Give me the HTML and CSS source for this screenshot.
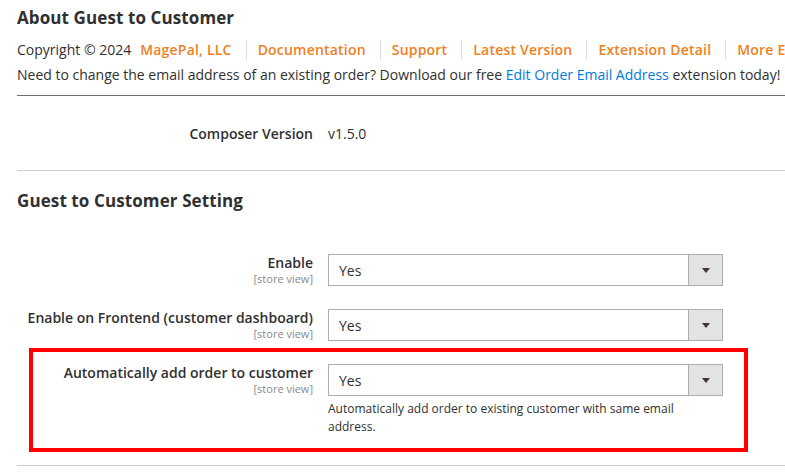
FILE: index.html
```html
<!DOCTYPE html>
<html lang="en">
<head>
<meta charset="utf-8">
<title>Guest to Customer</title>
<link rel="stylesheet" href="styles.css">
</head>
<body>
<div class="page">
  <section class="about">
    <h2 class="section-title">About Guest to Customer</h2>
    <div class="info">
      <div class="links">
        <span class="copy">Copyright © 2024</span>
        <a class="orange first" href="#">MagePal, LLC</a>
        <a class="orange" href="#">Documentation</a>
        <a class="orange" href="#">Support</a>
        <a class="orange" href="#">Latest Version</a>
        <a class="orange" href="#">Extension Detail</a>
        <a class="orange" href="#">More Extensions</a>
      </div>
      <div class="promo">Need to change the email address of an existing order? Download our free <a class="blue" href="#">Edit Order Email Address</a> extension today!</div>
    </div>
  </section>

  <section class="composer">
    <div class="composer-row">
      <div class="composer-label">Composer Version</div>
      <div class="composer-value">v1.5.0</div>
    </div>
  </section>

  <section class="settings">
    <h2 class="section-title">Guest to Customer Setting</h2>

    <div class="field">
      <div class="label"><span class="label-text">Enable</span><span class="scope">[store view]</span></div>
      <div class="control">
        <div class="select"><span class="select-value">Yes</span><span class="select-btn"><span class="arrow"></span></span></div>
      </div>
    </div>

    <div class="field">
      <div class="label"><span class="label-text">Enable on Frontend (customer dashboard)</span><span class="scope">[store view]</span></div>
      <div class="control">
        <div class="select"><span class="select-value">Yes</span><span class="select-btn"><span class="arrow"></span></span></div>
      </div>
    </div>

    <div class="field field-highlight">
      <div class="label"><span class="label-text">Automatically add order to customer</span><span class="scope">[store view]</span></div>
      <div class="control">
        <div class="select"><span class="select-value">Yes</span><span class="select-btn"><span class="arrow"></span></span></div>
        <div class="note">Automatically add order to existing customer with same email address.</div>
      </div>
    </div>
  </section>
</div>
</body>
</html>
```

FILE: styles.css
```css
html, body {
  margin: 0;
  padding: 0;
  background: #ffffff;
  overflow: hidden;
}

body {
  font-family: "Open Sans", "Liberation Sans", sans-serif;
  color: #303030;
  font-size: 14px;
}

.page {
  padding-left: 17px;
  width: 900px;
}

.section-title {
  margin: 0;
  font-size: 17px;
  font-weight: 700;
  letter-spacing: 0.1px;
  line-height: 26px;
  color: #303030;
}

.about {
  padding-top: 5px;
  padding-bottom: 10px;
  border-bottom: 1px solid #6e6e6e;
}

.info {
  margin-top: 9px;
}

.links {
  display: flex;
  align-items: center;
  white-space: nowrap;
  height: 20px;
  line-height: 20px;
}

.copy {
  margin-right: 9px;
}

.orange {
  color: #ef8022;
  font-weight: 600;
  letter-spacing: 0.2px;
  text-decoration: none;
  padding-left: 11px;
  margin-left: 14px;
  border-left: 1px solid #dddddd;
}

.orange.first {
  padding-left: 0;
  margin-left: 0;
  border-left: none;
}

.promo {
  margin-top: 5px;
  line-height: 20px;
  white-space: nowrap;
}

.blue {
  color: #007bdb;
  text-decoration: none;
}

.composer {
  padding-top: 28px;
  padding-bottom: 26px;
  border-bottom: 1px solid #cccccc;
}

.composer-row {
  display: flex;
  line-height: 20px;
}

.composer-label {
  width: 296px;
  text-align: right;
  font-weight: 600;
}

.composer-value {
  margin-left: 15px;
}

.settings {
  padding-top: 17px;
  padding-bottom: 29px;
  border-bottom: 1px solid #cccccc;
}

.settings .section-title {
  margin-bottom: 40px;
}

.field {
  display: flex;
  align-items: flex-start;
  margin-bottom: 23px;
}

.field:last-child {
  margin-bottom: 0;
}

.label {
  width: 296px;
  display: flex;
  flex-direction: column;
  align-items: flex-end;
  text-align: right;
}

.label-text {
  font-weight: 600;
  line-height: 18px;
}

.scope {
  font-size: 11px;
  line-height: 14px;
  color: #8a8a8a;
}

.control {
  margin-left: 15px;
  width: 395px;
}

.select {
  box-sizing: border-box;
  height: 32px;
  border: 1px solid #adadad;
  display: flex;
  align-items: stretch;
  background: #ffffff;
}

.select-value {
  flex: 1;
  padding-left: 10px;
  line-height: 31px;
}

.select-btn {
  width: 33px;
  background: #e3e3e3;
  border-left: 1px solid #adadad;
  display: flex;
  align-items: center;
  justify-content: center;
}

.arrow {
  width: 0;
  height: 0;
  border-left: 4px solid transparent;
  border-right: 4px solid transparent;
  border-top: 5px solid #41362f;
}

.note {
  margin-top: 4px;
  font-size: 12px;
  line-height: 18px;
  color: #303030;
}

.field-highlight {
  position: relative;
}

.field-highlight::after {
  content: "";
  position: absolute;
  left: 12px;
  top: -16px;
  width: 719px;
  height: 104px;
  box-sizing: border-box;
  border: 4px solid #ff0000;
  pointer-events: none;
}
```
